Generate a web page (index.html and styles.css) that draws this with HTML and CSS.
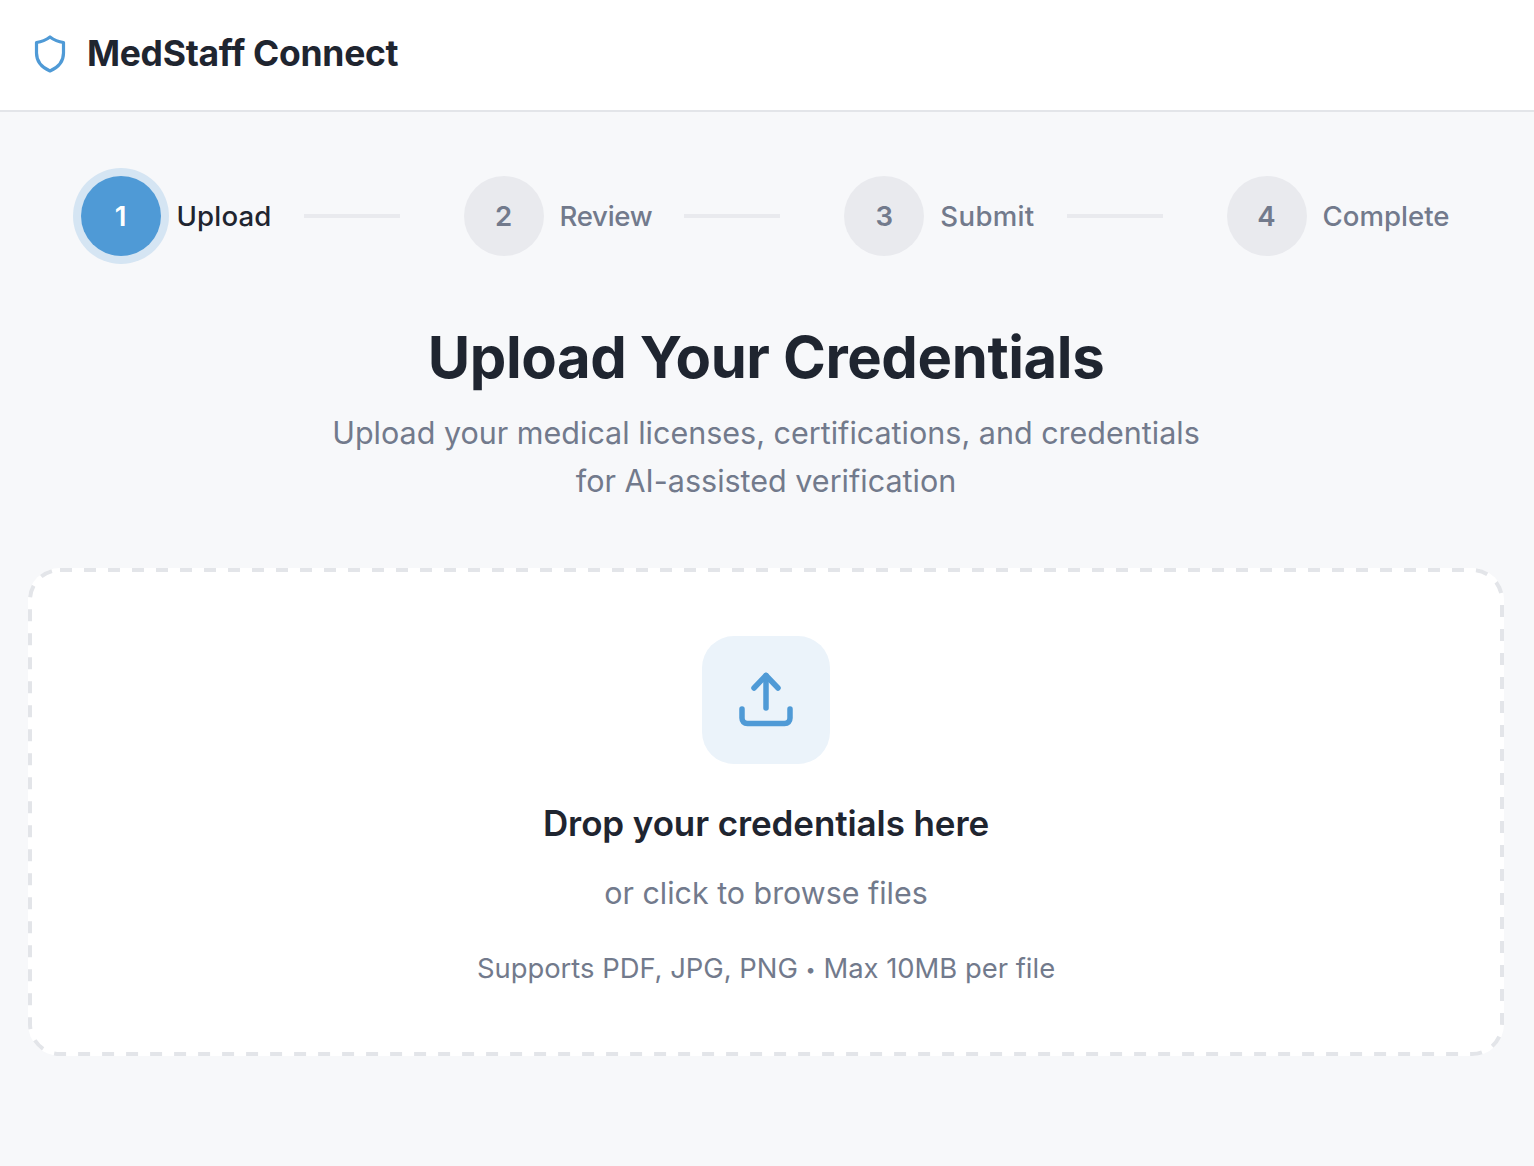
FILE: index.html
```html
<!DOCTYPE html>
<html lang="en">
<head>
  <meta charset="UTF-8">
  <title>MedStaff Connect</title>
  <link rel="stylesheet" href="styles.css">
</head>
<body>
  <header class="topbar">
    <svg class="logo" viewBox="0 0 36 40" fill="none" stroke="currentColor" stroke-width="3.2" stroke-linejoin="round">
      <path d="M18 4 C14 7 9.5 8.8 4.5 9.5 V20 C4.5 28.5 10 34.5 18 38 C26 34.5 31.5 28.5 31.5 20 V9.5 C26.5 8.8 22 7 18 4 Z"/>
    </svg>
    <span class="brand">MedStaff Connect</span>
  </header>

  <main class="content">
    <div class="steps">
      <div class="step-group">
        <div class="step active"><span class="step-num">1</span><span class="step-label">Upload</span></div>
        <div class="connector"></div>
      </div>
      <div class="step-group">
        <div class="step"><span class="step-num">2</span><span class="step-label">Review</span></div>
        <div class="connector"></div>
      </div>
      <div class="step-group">
        <div class="step"><span class="step-num">3</span><span class="step-label">Submit</span></div>
        <div class="connector"></div>
      </div>
      <div class="step-group">
        <div class="step"><span class="step-num">4</span><span class="step-label">Complete</span></div>
      </div>
    </div>

    <div class="intro">
      <h1>Upload Your Credentials</h1>
      <p>Upload your medical licenses, certifications, and credentials<br>for AI-assisted verification</p>
    </div>

    <div class="dropzone">
      <svg class="dash-border" fill="none">
        <rect class="dash-rect" rx="30" ry="30"/>
      </svg>
      <div class="drop-icon">
        <svg viewBox="0 0 64 64" fill="none" stroke="currentColor" stroke-width="5.5" stroke-linecap="round" stroke-linejoin="round">
          <path d="M32 40 V7.5"/>
          <path d="M20 20 L32 7.5 L44 20"/>
          <path d="M8 41 V50 C8 53.5 10 55.5 13.5 55.5 H50.5 C54 55.5 56 53.5 56 50 V41"/>
        </svg>
      </div>
      <h2>Drop your credentials here</h2>
      <p class="browse">or click to browse files</p>
      <p class="limits">Supports PDF, JPG, PNG <span class="sep">•</span> Max 10MB per file</p>
    </div>
  </main>
</body>
</html>
```

FILE: styles.css
```css
* {
  box-sizing: border-box;
}
body {
  margin: 0;
  background: #f7f8fa;
  color: #1f2530;
  font-family: Inter, "Liberation Sans", sans-serif;
}
.topbar {
  display: flex;
  align-items: center;
  gap: 19px;
  height: 112px;
  padding: 0 32px 4px;
  background: white;
  border-bottom: 2px solid #e3e5e9;
}
.logo {
  width: 36px;
  height: 40px;
  color: #4f9ad6;
}
.brand {
  font-size: 35.5px;
  font-weight: 700;
  letter-spacing: -0.3px;
}
.content {
  padding: 64px 30px 110px 28px;
}
.steps {
  display: flex;
  justify-content: center;
  gap: 64px;
  padding-right: 2px;
}
.step-group {
  display: flex;
  align-items: center;
  gap: 32px;
}
.step {
  display: flex;
  align-items: center;
  gap: 16px;
}
.step-num {
  display: flex;
  align-items: center;
  justify-content: center;
  width: 80px;
  height: 80px;
  border-radius: 50%;
  background: #e9eaee;
  color: #727a8c;
  font-size: 27.6px;
  font-weight: 600;
}
.step-label {
  font-size: 27.6px;
  font-weight: 500;
  color: #727a8c;
}
.step-group:nth-child(1) .step-label {
  letter-spacing: 0.15px;
}
.step-group:nth-child(2) .step-label {
  letter-spacing: -0.3px;
}
.step-group:nth-child(3) .step-label {
  letter-spacing: 0.3px;
}
.active .step-num {
  background: #4f9ad6;
  color: white;
  box-shadow: 0 0 0 8px rgba(79, 154, 214, 0.2);
}
.active .step-label {
  color: #1f2530;
}
.connector {
  width: 96px;
  height: 4px;
  background: #e9eaee;
}
.intro {
  margin-top: 63px;
  text-align: center;
}
.intro h1 {
  margin: 0;
  font-size: 58px;
  line-height: 76px;
  font-weight: 700;
  letter-spacing: -0.4px;
}
.intro p {
  margin: 14px 0 0;
  font-size: 30.5px;
  line-height: 48px;
  color: #727a8c;
}
.dropzone {
  position: relative;
  margin-top: 63px;
  padding: 68px 68px 66px;
  background: white;
  border-radius: 32px;
  text-align: center;
}
.dash-border {
  position: absolute;
  top: 0;
  left: 0;
  width: 100%;
  height: 100%;
}
.dash-rect {
  x: 2px;
  y: 2px;
  width: calc(100% - 4px);
  height: calc(100% - 4px);
  stroke: #e3e5e9;
  stroke-width: 4;
  stroke-dasharray: 12 12;
}
.drop-icon {
  display: flex;
  align-items: center;
  justify-content: center;
  width: 128px;
  height: 128px;
  margin: 0 auto;
  border-radius: 32px;
  background: #ebf3fa;
  color: #4f9ad6;
}
.drop-icon svg {
  width: 64px;
  height: 64px;
}
.dropzone h2 {
  margin: 35px 0 0;
  font-size: 35px;
  line-height: 48px;
  font-weight: 600;
  letter-spacing: -0.1px;
}
.browse {
  margin: 22px 0 0;
  font-size: 30.4px;
  line-height: 48px;
  color: #727a8c;
}
.limits {
  margin: 31px 0 0;
  font-size: 27.4px;
  line-height: 40px;
  color: #727a8c;
}
.sep {
  font-size: 18px;
  vertical-align: 2px;
}
```
